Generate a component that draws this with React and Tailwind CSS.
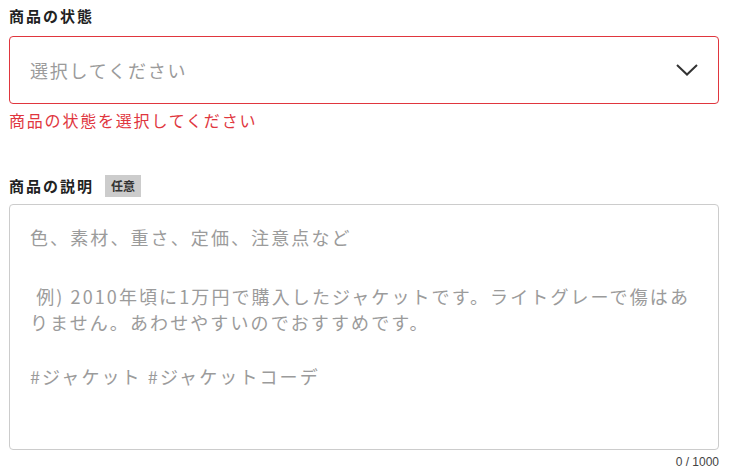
import React from 'react';

const App = () => {
    return (
        <div className="w-[736px] h-[472px] bg-white px-[9px] pt-[5px] text-[#222] font-['Noto_Sans_CJK_JP',sans-serif]">
            {/* 商品の状態 */}
            <div className="text-[15px] font-bold tracking-[2px] leading-[22px]">商品の状態</div>
            <div className="mt-[9px] w-[710px] h-[68px] border border-[#e0363e] rounded-[4px] flex items-center justify-between pl-[20px] pr-[20px]">
                <span className="text-[18px] tracking-[1.8px] text-[#9b9b9b]">選択してください</span>
                <svg width="22" height="12" viewBox="0 0 22 12" fill="none">
                    <path d="M1 1l10 9.5L21 1" stroke="#333" strokeWidth="2" />
                </svg>
            </div>
            <div className="mt-[4px] text-[16px] tracking-[1.8px] leading-[24px] text-[#e0363e]">商品の状態を選択してください</div>

            {/* 商品の説明 */}
            <div className="mt-[43px] flex items-center gap-[11px]">
                <span className="text-[15px] font-bold tracking-[2px] leading-[22px]">商品の説明</span>
                <span className="bg-[#cccccc] text-[12px] font-bold text-[#333] px-[6px] leading-[22px]">任意</span>
            </div>
            <div className="mt-[7px] w-[710px] h-[246px] border border-[#cccccc] rounded-[4px] pl-[20px] pt-[19px] text-[18px] tracking-[2.1px] text-[#9b9b9b]">
                <div className="leading-[26px]">色、素材、重さ、定価、注意点など</div>
                <div className="leading-[26px] mt-[33px]">&nbsp;例) 2010年頃に1万円で購入したジャケットです。ライトグレーで傷はあ</div>
                <div className="leading-[26px]">りません。あわせやすいのでおすすめです。</div>
                <div className="leading-[26px] mt-[28px]">#ジャケット #ジャケットコーデ</div>
            </div>
            <div className="mt-[4px] w-[710px] text-right text-[12px] text-[#444] leading-[16px] font-['Liberation_Sans',sans-serif]">0 / 1000</div>
        </div>
    );
};

export default App;
